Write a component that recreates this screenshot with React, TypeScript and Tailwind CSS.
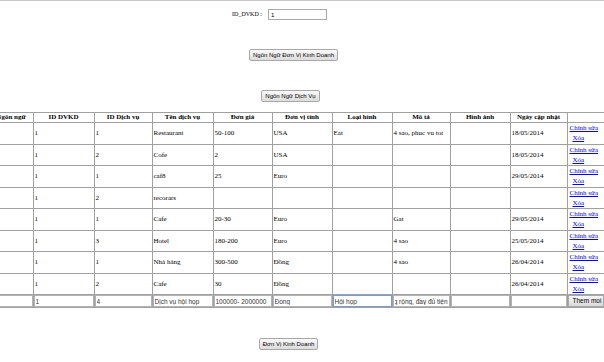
import React, { useEffect, useRef } from 'react';

const cols = [44, 61, 58, 61, 59, 60, 60, 58, 60, 57, 37];

const headers = [
  'Ngôn ngữ',
  'ID DVKD',
  'ID Dịch vụ',
  'Tên dịch vụ',
  'Đơn giá',
  'Đơn vị tính',
  'Loại hình',
  'Mô tả',
  'Hình ảnh',
  'Ngày cập nhật',
  '',
];

// dữ liệu dịch vụ
const rows = [
  ['', '1', '1', 'Restaurant', '50-100', 'USA', 'Eat', '4 sao, phuc vu tot', '', '18/05/2014'],
  ['', '1', '2', 'Cofe', '2', 'USA', '', '', '', '18/05/2014'],
  ['', '1', '1', 'caf8', '25', 'Euro', '', '', '', '29/05/2014'],
  ['', '1', '2', 'recorars', '', '', '', '', '', ''],
  ['', '1', '1', 'Cafe', '20-30', 'Euro', '', 'Gat', '', '29/05/2014'],
  ['', '1', '3', 'Hotel', '180-200', 'Euro', '', '4 sao', '', '25/05/2014'],
  ['', '1', '1', 'Nhà hàng', '300-500', 'Đồng', '', '4 sao', '', '26/04/2014'],
  ['', '1', '2', 'Cafe', '30', 'Đồng', '', '', '', '26/04/2014'],
];

const inputs = ['', '1', '4', 'Dịch vụ hội họp', '100000- 2000000', 'Đồng', 'Hội họp', 'Phòng rộng, đầy đủ tiện', '', ''];

function OldButton({ label, className = '' }: { label: string; className?: string }) {
  return (
    <button
      type="button"
      className={`h-[12px] px-[3px] border border-[#a8a8a8] rounded-[2px] bg-gradient-to-b from-[#fafafa] to-[#dcdcdc] text-[6px] leading-[10px] text-black font-['Liberation_Sans',sans-serif] ${className}`}
    >
      {label}
    </button>
  );
}

function CellInput({ value, focused }: { value: string; focused?: boolean }) {
  const ref = useRef<HTMLInputElement>(null);
  // texte long : on affiche la fin comme un champ défilé
  useEffect(() => {
    if (ref.current) ref.current.scrollLeft = 9999;
  }, []);
  return (
    <input
      ref={ref}
      readOnly
      value={value}
      className={`block w-full h-[12px] border px-[1px] py-0 text-[6.5px] leading-[10px] font-['Liberation_Sans',sans-serif] text-[#333] outline-none ${focused ? 'border-[#7b9bd1]' : 'border-[#b4b4b4]'}`}
    />
  );
}

export default function App() {
  return (
    <div className="w-[604px] h-[362px] overflow-hidden bg-white border-t border-[#c8c8c8]">
      <div className="ml-[-11px] w-[615px] flex flex-col items-center pt-[8px] font-['Liberation_Serif',serif] text-black">
        {/* ID_DVKD */}
        <div className="flex items-center gap-[6px] pr-[34px] h-[11px]">
          <span className="text-[6px] leading-[11px]">ID_DVKD :</span>
          <input
            readOnly
            value="1"
            className="w-[59px] h-[11px] border border-[#a9a9a9] px-[2px] text-[6px] leading-[9px] font-['Liberation_Sans',sans-serif] outline-none"
          />
        </div>

        <OldButton label="Ngôn Ngữ Đơn Vị Kinh Doanh" className="mt-[29px] mr-[6px]" />
        <OldButton label="Ngôn Ngữ Dịch Vụ" className="mt-[29px] mr-[12px]" />

        <table className="mt-[10px] w-[615px] table-fixed border-collapse border border-[#8c8c8c] text-[7px]">
          <colgroup>
            {cols.map((w, i) => (
              <col key={i} style={{ width: w }} />
            ))}
          </colgroup>
          <thead>
            <tr>
              {headers.map((h, i) => (
                <th key={i} className="border border-[#a0a0a0] p-0 h-[10px] leading-[9px] font-bold text-center whitespace-nowrap">
                  {h}
                </th>
              ))}
            </tr>
          </thead>
          <tbody>
            {rows.map((r, ri) => (
              <tr key={ri}>
                {r.map((c, ci) => (
                  <td key={ci} className="border border-[#a0a0a0] py-0 pl-[1px] pr-0 align-middle leading-[10.25px] whitespace-nowrap overflow-hidden">
                    {c}
                  </td>
                ))}
                <td className="border border-[#a0a0a0] py-0 pl-[2px] align-middle leading-[10.25px] whitespace-nowrap">
                  <a href="#" className="text-[#0000ee] underline">Chỉnh sửa</a>
                  <br />
                  <a href="#" className="ml-[3px] text-[#0000ee] underline">Xóa</a>
                </td>
              </tr>
            ))}
            <tr>
              {inputs.map((v, i) => (
                <td key={i} className="border border-[#a0a0a0] p-0">
                  <CellInput value={v} focused={i === 6} />
                </td>
              ))}
              <td className="border border-[#a0a0a0] p-0">
                <button
                  type="button"
                  className="block w-full h-[12px] border border-[#a8a8a8] bg-gradient-to-b from-[#f6f6f6] to-[#dadada] text-[6.5px] leading-[10px] text-left pl-[4px] font-['Liberation_Sans',sans-serif] whitespace-nowrap overflow-hidden"
                >
                  Them moi
                </button>
              </td>
            </tr>
          </tbody>
        </table>

        <OldButton label="Đơn Vị Kinh Doanh" className="mt-[30px] mr-[16px]" />
      </div>
    </div>
  );
}
